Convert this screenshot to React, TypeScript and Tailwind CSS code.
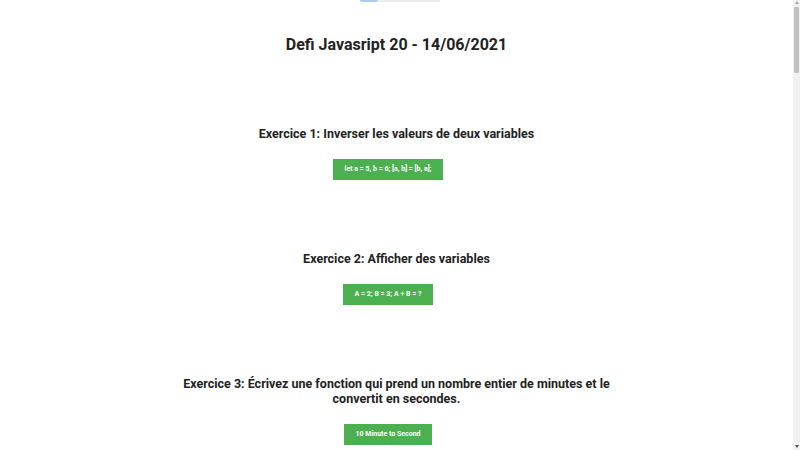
const exercises = [
	{ title: "Exercice 1: Inverser les valeurs de deux variables", button: "let a = 5, b = 6; [a, b] = [b, a];" },
	{ title: "Exercice 2: Afficher des variables", button: "A = 2; B = 3; A + B = ?" },
	{
		title: "Exercice 3: Écrivez une fonction qui prend un nombre entier de minutes et le convertit en secondes.",
		button: "10 Minute to Second",
	},
];

function Exercise({ title, button }: { title: string; button: string }) {
	return (
		<section className="flex flex-col items-center">
			<h3 className="mx-auto max-w-[445px] text-center text-[12.5px] font-bold leading-[15px] text-[#222]">
				{title}
			</h3>
			<button className="mt-[18px] mr-[17px] h-[21px] bg-[#4caf50] px-[11.5px] text-[7px] font-bold text-white">
				{button}
			</button>
		</section>
	);
}

function Scrollbar() {
	return (
		<div className="flex w-[7px] flex-col items-center bg-[#f1f1f1]">
			<span className="mt-[1px] h-0 w-0 border-x-[2px] border-b-[3px] border-x-transparent border-b-[#a3a3a3]" />
			<div className="mt-[3px] h-[66px] w-[5px] rounded-[1px] bg-[#c1c1c1]" />
			<div className="flex-1" />
			<span className="mb-[2px] h-0 w-0 border-x-[2px] border-t-[3px] border-x-transparent border-t-[#505050]" />
		</div>
	);
}

export default function App() {
	return (
		<div className="flex h-screen overflow-hidden bg-white font-['Roboto',sans-serif]">
			<main className="flex-1">
				<div className="flex justify-center pl-[7px]">
					<div className="flex h-[2px] w-[80px]">
						<div className="w-[18px] rounded-b-sm bg-[#a7cdf0]" />
						<div className="flex-1 bg-[#ececec]" />
					</div>
				</div>
				<h1 className="mt-[31px] text-center text-[16px] leading-[24px] font-bold text-[#222]">
					Defi Javasript 20 - 14/06/2021
				</h1>
				<div className="mt-[69px] flex flex-col gap-[71px] pb-[40px]">
					{exercises.map((ex) => (
						<Exercise key={ex.title} {...ex} />
					))}
				</div>
			</main>
			<Scrollbar />
		</div>
	);
}
